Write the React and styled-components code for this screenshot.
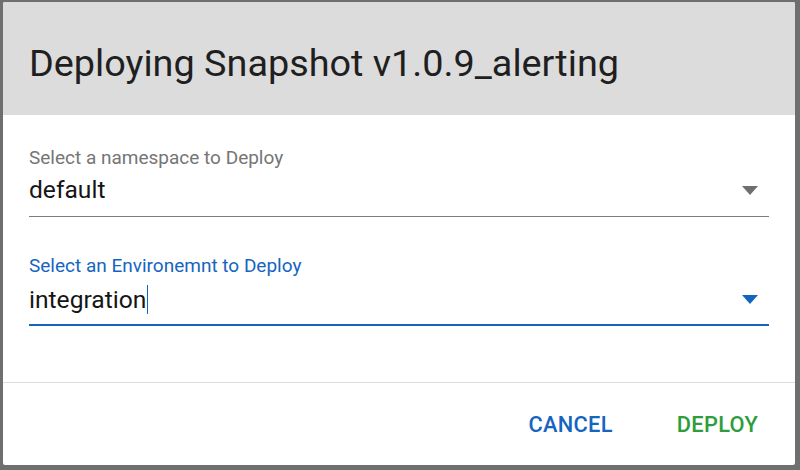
import React from "react";
import styled, { createGlobalStyle } from "styled-components";

const Global = createGlobalStyle`
  html, body { margin: 0; padding: 0; background: #6f6f6f; }
  body { font-family: Roboto, "Liberation Sans", sans-serif; }
`;

const Page = styled.div`
  width: 800px;
  height: 470px;
  padding: 2px 5px 5px 3px;
  box-sizing: border-box;
`;

const Dialog = styled.div`
  width: 792px;
  height: 463px;
  background: #ffffff;
  border-radius: 2px;
  overflow: hidden;
  display: flex;
  flex-direction: column;
`;

const Header = styled.div`
  height: 113px;
  background: #dcdcdc;
  display: flex;
  align-items: center;
  padding: 0 26px;
  box-sizing: border-box;
`;

const Title = styled.h2`
  margin: 0;
  font-size: 37.8px;
  line-height: 44px;
  font-weight: 400;
  color: #1f1f1f;
  padding-top: 9px;
`;

const Content = styled.div`
  padding: 33px 26px 56px;
  border-bottom: 1px solid #dcdcdc;
  display: flex;
  flex-direction: column;
  gap: 39px;
`;

const Field = styled.div`
  display: flex;
  flex-direction: column;
`;

const Label = styled.label`
  font-size: 19px;
  line-height: 20px;
  color: ${(p) => (p.$focused ? "#1565c0" : "#757575")};
`;

const ValueRow = styled.div`
  display: flex;
  align-items: center;
  justify-content: space-between;
  padding: 9px 11px ${(p) => (p.$focused ? "10px" : "13px")} 0;
  border-bottom: ${(p) => (p.$focused ? "2px solid #1565c0" : "1px solid #7d7d7d")};
`;

const Value = styled.span`
  font-size: 24.6px;
  line-height: 26px;
  color: #151515;
  display: flex;
  align-items: center;
`;

const Caret = styled.span`
  display: inline-block;
  width: 1px;
  height: 29px;
  background: #1565c0;
  margin-left: 1px;
`;

const Arrow = styled.svg`
  width: 16px;
  height: 9px;
  fill: ${(p) => (p.$focused ? "#1565c0" : "#6f6f6f")};
`;

const Actions = styled.div`
  flex: 1;
  display: flex;
  justify-content: flex-end;
  align-items: center;
  gap: 24px;
  padding: 0 17px 0 0;
`;

const Button = styled.button`
  background: none;
  border: none;
  padding: 8px 20px;
  font-family: Roboto, "Liberation Sans", sans-serif;
  font-size: 21.8px;
  font-weight: 500;
  letter-spacing: 0.3px;
  text-transform: uppercase;
  color: ${(p) => p.$color};
  cursor: pointer;
`;

function Select({ label, value, focused }) {
  return (
    <Field>
      <Label $focused={focused}>{label}</Label>
      <ValueRow $focused={focused}>
        <Value>
          {value}
          {focused && <Caret />}
        </Value>
        <Arrow $focused={focused} viewBox="0 0 16 9">
          <polygon points="0,0 16,0 8,9" />
        </Arrow>
      </ValueRow>
    </Field>
  );
}

export default function App() {
  return (
    <>
      <Global />
      <Page>
        <Dialog>
          <Header>
            <Title>Deploying Snapshot v1.0.9_alerting</Title>
          </Header>
          <Content>
            <Select label="Select a namespace to Deploy" value="default" />
            <Select label="Select an Environemnt to Deploy" value="integration" focused />
          </Content>
          <Actions>
            <Button $color="#1565c0">Cancel</Button>
            <Button $color="#2e9d3b">Deploy</Button>
          </Actions>
        </Dialog>
      </Page>
    </>
  );
}
